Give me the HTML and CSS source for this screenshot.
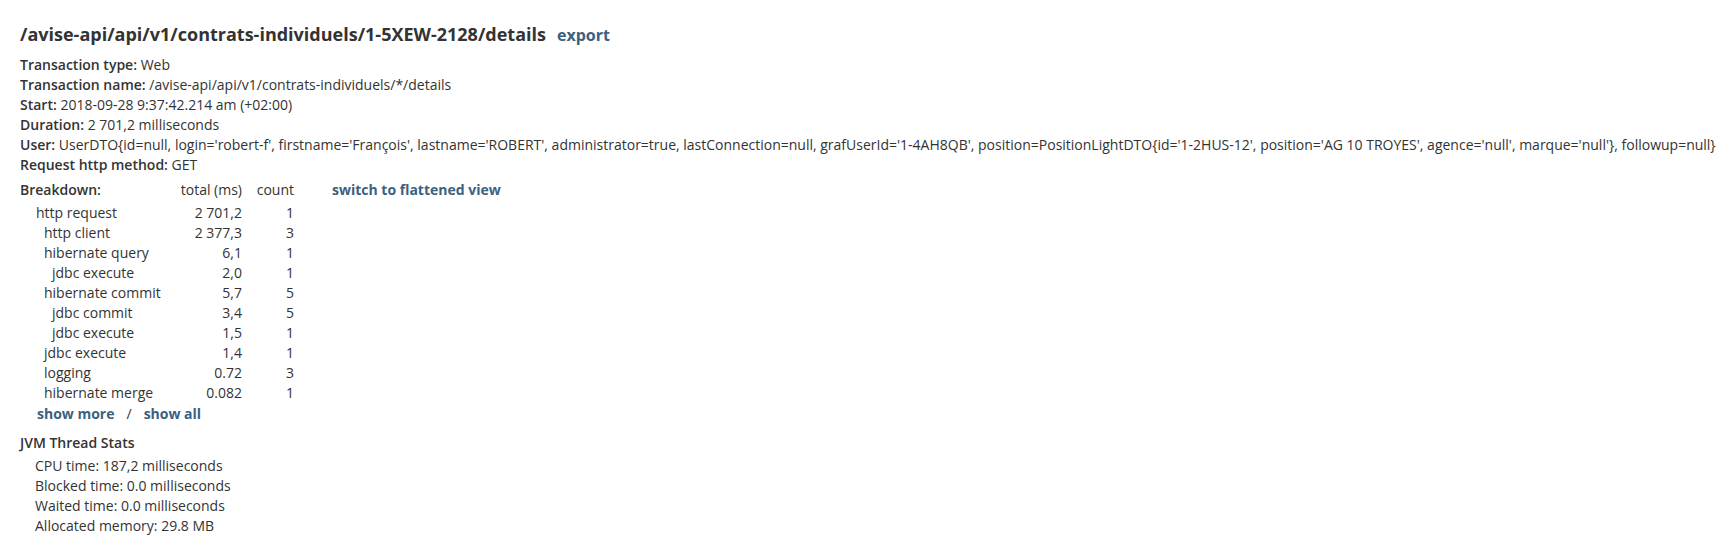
FILE: index.html
```html
<!DOCTYPE html>
<html>
<head>
<meta charset="utf-8">
<link rel="stylesheet" href="styles.css">
</head>
<body>
<div class="page">
  <div class="title-row">
    <h1 class="title">/avise-api/api/v1/contrats-individuels/1-5XEW-2128/details</h1>
    <a class="link export">export</a>
  </div>
  <div class="props">
    <div><b>Transaction type:</b> Web</div>
    <div><b>Transaction name:</b> /avise-api/api/v1/contrats-individuels/*/details</div>
    <div><b>Start:</b> 2018-09-28 9:37:42.214 am (+02:00)</div>
    <div><b>Duration:</b> 2 701,2 milliseconds</div>
    <div class="nowrap"><b>User:</b> UserDTO{id=null, login='robert-f', firstname='François', lastname='ROBERT', administrator=true, lastConnection=null, grafUserId='1-4AH8QB', position=PositionLightDTO{id='1-2HUS-12', position='AG 10 TROYES', agence='null', marque='null'}, followup=null}</div>
    <div><b>Request http method:</b> GET</div>
  </div>
  <div class="breakdown">
    <div class="bd-head">
      <div class="c-name"><b>Breakdown:</b></div>
      <div class="c-total">total (ms)</div>
      <div class="c-count">count</div>
      <a class="link switch">switch to flattened view</a>
    </div>
    <div class="bd-rows">
      <div class="bd-row"><div class="c-name l0">http request</div><div class="c-total">2 701,2</div><div class="c-count">1</div></div>
      <div class="bd-row"><div class="c-name l1">http client</div><div class="c-total">2 377,3</div><div class="c-count">3</div></div>
      <div class="bd-row"><div class="c-name l1">hibernate query</div><div class="c-total">6,1</div><div class="c-count">1</div></div>
      <div class="bd-row"><div class="c-name l2">jdbc execute</div><div class="c-total">2,0</div><div class="c-count">1</div></div>
      <div class="bd-row"><div class="c-name l1">hibernate commit</div><div class="c-total">5,7</div><div class="c-count">5</div></div>
      <div class="bd-row"><div class="c-name l2">jdbc commit</div><div class="c-total">3,4</div><div class="c-count">5</div></div>
      <div class="bd-row"><div class="c-name l2">jdbc execute</div><div class="c-total">1,5</div><div class="c-count">1</div></div>
      <div class="bd-row"><div class="c-name l1">jdbc execute</div><div class="c-total">1,4</div><div class="c-count">1</div></div>
      <div class="bd-row"><div class="c-name l1">logging</div><div class="c-total">0.72</div><div class="c-count">3</div></div>
      <div class="bd-row"><div class="c-name l1">hibernate merge</div><div class="c-total">0.082</div><div class="c-count">1</div></div>
    </div>
    <div class="more">
      <a class="link">show more</a>
      <span class="sep">/</span>
      <a class="link">show all</a>
    </div>
  </div>
  <div class="jvm">
    <div class="jvm-title">JVM Thread Stats</div>
    <div class="jvm-list">
      <div>CPU time: 187,2 milliseconds</div>
      <div>Blocked time: 0.0 milliseconds</div>
      <div>Waited time: 0.0 milliseconds</div>
      <div>Allocated memory: 29.8 MB</div>
    </div>
  </div>
</div>
</body>
</html>
```

FILE: styles.css
```css
html, body {
  margin: 0;
  background: #fff;
}
* {
  box-sizing: border-box;
}
body {
  font-family: "Open Sans", "DejaVu Sans", sans-serif;
  font-size: 14px;
  line-height: 20px;
  color: #333;
}
.page {
  padding: 22px 0 0 20px;
}
b {
  font-weight: 600;
}
.nowrap {
  white-space: nowrap;
}
.link {
  color: #3b6180;
  font-weight: 700;
  text-decoration: none;
}
.title-row {
  display: flex;
  align-items: baseline;
  gap: 11px;
}
.title {
  margin: 0;
  font-size: 18px;
  line-height: 24px;
  font-weight: 700;
}
.export {
  font-size: 16px;
}
.props {
  margin-top: 9px;
}
.breakdown {
  margin-top: 5px;
}
.bd-head, .bd-row {
  display: flex;
}
.c-name {
  width: 152px;
  flex: none;
  white-space: nowrap;
}
.c-total {
  width: 70px;
  flex: none;
  text-align: right;
  white-space: nowrap;
}
.c-count {
  width: 52px;
  flex: none;
  text-align: right;
}
.switch {
  margin-left: 38px;
}
.bd-rows {
  margin-top: 3px;
}
.l0 { padding-left: 16px; }
.l1 { padding-left: 24px; }
.l2 { padding-left: 32px; }
.more {
  margin-top: 1px;
  padding-left: 17px;
  display: flex;
  gap: 12px;
}
.sep {
  color: #333;
}
.jvm {
  margin-top: 9px;
}
.jvm-title {
  font-weight: 600;
}
.jvm-list {
  margin-top: 3px;
  padding-left: 15px;
}
```
